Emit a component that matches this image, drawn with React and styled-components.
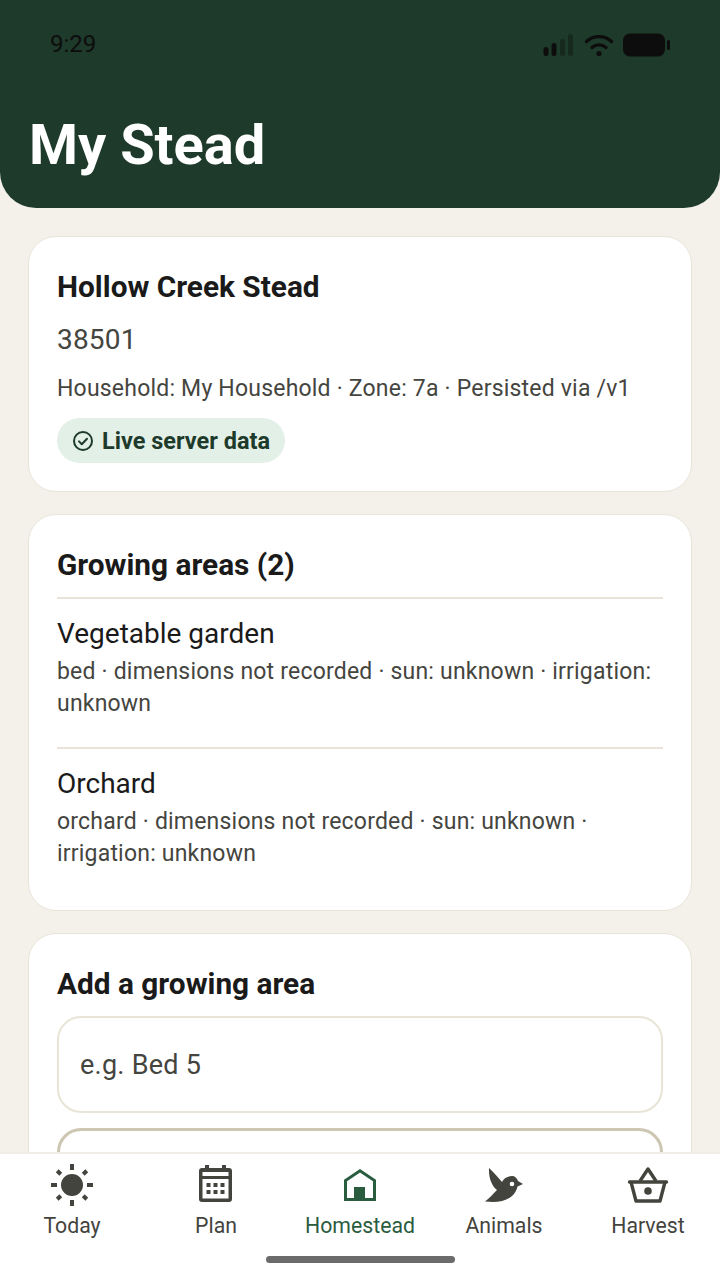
import React from 'react';
import styled, { createGlobalStyle } from 'styled-components';

const GlobalStyle = createGlobalStyle`
  html, body {
    margin: 0;
    padding: 0;
    background: #f4f1ea;
    font-family: Roboto, "Liberation Sans", sans-serif;
  }
  * { box-sizing: border-box; }
`;

const Screen = styled.div`
  width: 720px;
  height: 1280px;
  display: flex;
  flex-direction: column;
  overflow: hidden;
  background: #f4f1ea;
`;

const Header = styled.header`
  flex: none;
  height: 208px;
  background: #1e3a2b;
  border-radius: 0 0 36px 36px;
  padding: 0 50px 0 29px;
  display: flex;
  flex-direction: column;
`;

const StatusBar = styled.div`
  height: 90px;
  display: flex;
  align-items: center;
  justify-content: space-between;
  padding-left: 21px;
`;

const Clock = styled.span`
  font-size: 24px;
  color: #0d0d0d;
  margin-top: -2px;
`;

const StatusIcons = styled.div`
  display: flex;
  align-items: center;
  gap: 9px;
  margin-top: -1px;
`;

const Title = styled.h1`
  margin: 0;
  font-size: 56px;
  line-height: 60px;
  font-weight: 700;
  color: #fff;
  padding-top: 25px;
`;

const Content = styled.main`
  flex: 1;
  min-height: 0;
  overflow: hidden;
  padding: 28px 28px 0;
  display: flex;
  flex-direction: column;
  gap: 22px;
`;

const Card = styled.section`
  flex: none;
  background: #fff;
  border: 1px solid #e8e4d9;
  border-radius: 28px;
  padding: 28px;
`;

const CardTitle = styled.h2`
  margin: 0;
  font-size: 29.8px;
  line-height: 44px;
  font-weight: 700;
  color: #1a1a1a;
`;

const Zip = styled.div`
  font-size: 28px;
  line-height: 40px;
  margin-top: 11px;
  color: #454540;
  letter-spacing: 0.2px;
`;

const Meta = styled.div`
  font-size: 23px;
  line-height: 32px;
  margin-top: 13px;
  color: #454540;
  letter-spacing: 0.2px;
`;

const Badge = styled.div`
  display: flex;
  width: fit-content;
  align-items: center;
  gap: 8px;
  height: 45px;
  margin-top: 13px;
  padding: 0 15px;
  border-radius: 23px;
  background: #e3f0e8;
  color: #1e3a2b;
  font-size: 23.5px;
  font-weight: 700;
`;

const AreaList = styled.div`
  margin-top: 10px;
`;

const AreaRow = styled.div`
  border-top: 2px solid #e8e4d9;
  padding: 15px 0 27px;

  &:last-child {
    padding-bottom: 12px;
  }
`;

const AreaName = styled.div`
  font-size: 28px;
  line-height: 40px;
  color: #1a1a1a;
`;

const AreaMeta = styled.div`
  font-size: 23px;
  line-height: 32px;
  margin-top: 2px;
  color: #454540;
  letter-spacing: 0.2px;
`;

const Fields = styled.div`
  display: flex;
  flex-direction: column;
  gap: 15px;
  margin-top: 10px;
`;

const Field = styled.div`
  flex: none;
  height: 97px;
  padding: 0 21px;
  display: flex;
  align-items: center;
  border: ${p => (p.$focused ? '3px solid #cdc6b2' : '2px solid #e8e4d6')};
  border-radius: 24px;
  font-size: 27px;
  color: #454540;
  letter-spacing: 0.25px;
  background: #fff;
`;

const TabBar = styled.nav`
  flex: none;
  height: 128px;
  background: #fff;
  border-top: 2px solid #f0ede6;
  display: grid;
  grid-template-columns: repeat(5, 144px);
  position: relative;
`;

const Tab = styled.div`
  display: flex;
  flex-direction: column;
  align-items: center;
  padding-top: 9px;
  color: ${p => (p.$active ? '#2a5c40' : '#44443e')};
  font-size: 21.25px;
  font-weight: 450;
`;

const TabIcon = styled.div`
  width: 44px;
  height: 44px;
  display: flex;
  align-items: center;
  justify-content: center;
`;

const TabLabel = styled.span`
  line-height: 28px;
  margin-top: 5px;
`;

const HomeIndicator = styled.div`
  position: absolute;
  left: 266px;
  bottom: 17px;
  width: 189px;
  height: 7px;
  border-radius: 4px;
  background: #6b6b6b;
`;

const Signal = () => (
  <svg width="32" height="24" viewBox="0 0 32 24">
    <rect x="0.500" y="14" width="5" height="9" rx="2.500" fill="#0d0d0d" />
    <rect x="8.500" y="10" width="5" height="13" rx="2.500" fill="#0d0d0d" />
    <rect x="17" y="6" width="5" height="17" rx="2.500" fill="#16291f" />
    <rect x="25" y="1" width="5" height="22" rx="2.500" fill="#16291f" />
  </svg>
);

const Wifi = () => (
  <svg width="30" height="24" viewBox="0 0 30 24" fill="none" stroke="#0d0d0d" strokeWidth="3.400" strokeLinecap="round">
    <path d="M2.500 8.500C9.500 2 20.500 2 27.500 8.500" />
    <path d="M8 14.500C12 11 18 11 22 14.500" />
    <circle cx="15" cy="20.500" r="2.600" fill="#0d0d0d" stroke="none" />
  </svg>
);

const Battery = () => (
  <svg width="47" height="24" viewBox="0 0 47 24">
    <rect x="0" y="0.500" width="42" height="23" rx="7" fill="#0d0d0d" />
    <rect x="44" y="7" width="3" height="10" rx="1.500" fill="#0d0d0d" />
  </svg>
);

const CheckCircle = () => (
  <svg width="22" height="22" viewBox="0 0 22 22" fill="none" stroke="#1e3a2b" strokeWidth="2" strokeLinecap="round" strokeLinejoin="round">
    <circle cx="11" cy="11" r="9" />
    <path d="M7 11.400l2.800 2.800L15 8.800" />
  </svg>
);

const SunIcon = () => (
  <svg width="42" height="42" viewBox="0 0 42 42" fill="#44443e">
    <circle cx="21" cy="21" r="11" />
    <rect x="19" y="0" width="4" height="6" />
    <rect x="19" y="36" width="4" height="6" />
    <rect x="0" y="19" width="6" height="4" />
    <rect x="36" y="19" width="6" height="4" />
    <rect x="5.500" y="6.500" width="5" height="4" transform="rotate(45 8 8.500)" />
    <rect x="31.500" y="6.500" width="5" height="4" transform="rotate(-45 34 8.500)" />
    <rect x="5.500" y="31.500" width="5" height="4" transform="rotate(-45 8 33.500)" />
    <rect x="31.500" y="31.500" width="5" height="4" transform="rotate(45 34 33.500)" />
  </svg>
);

const PlanIcon = () => (
  <svg width="34" height="40" viewBox="0 0 34 40" fill="#44443e">
    <rect x="6" y="0" width="4" height="6" />
    <rect x="23" y="0" width="4" height="6" />
    <path fillRule="evenodd" d="M3 3h27a3 3 0 0 1 3 3v28a3 3 0 0 1-3 3H3a3 3 0 0 1-3-3V6a3 3 0 0 1 3-3zM3.500 7v4h26V7zM3.500 14v19.500h26V14z" />
    <rect x="7.500" y="18" width="4" height="4" />
    <rect x="14.500" y="18" width="4" height="4" />
    <rect x="21.500" y="18" width="4" height="4" />
    <rect x="7.500" y="25" width="4" height="4" />
    <rect x="14.500" y="25" width="4" height="4" />
    <rect x="21.500" y="25" width="4" height="4" />
  </svg>
);

const HomeIcon = () => (
  <svg width="32" height="32" viewBox="0 0 32 32" fill="none">
    <path d="M1.500 30.500V11.500L16 1.800l14.500 9.700v19z" stroke="#2a5c40" strokeWidth="3" />
    <rect x="10" y="18" width="11" height="13" fill="#2a5c40" />
  </svg>
);

const BirdIcon = () => (
  <svg width="38" height="34" viewBox="0 0 38 34" fill="#44443e">
    <path d="M4 0C9 5 13 9 17 14C19 10 23 8 27 8C30 8 32 10 33 13L38 16L32.500 18.500C31 26 25 31 17 33C11 34.500 5 34 0 33.500C4 30.500 8 26 12 22C7 18 3.500 10 4 0Z" />
    <circle cx="27" cy="16" r="2.300" fill="#fff" />
  </svg>
);

const BasketIcon = () => (
  <svg width="42" height="36" viewBox="0 0 42 36" fill="none" stroke="#44443e" strokeWidth="3.400" strokeLinejoin="round">
    <path d="M2.500 15h37" strokeLinecap="round" />
    <path d="M4 15l5 19h24l5-19" />
    <path d="M13 14l8-12 8 12" />
    <circle cx="21" cy="24" r="3.800" fill="#44443e" stroke="none" />
  </svg>
);

const tabs = [
  { label: 'Today', icon: <SunIcon /> },
  { label: 'Plan', icon: <PlanIcon /> },
  { label: 'Homestead', icon: <HomeIcon />, active: true },
  { label: 'Animals', icon: <BirdIcon /> },
  { label: 'Harvest', icon: <BasketIcon /> },
];

const areas = [
  {
    name: 'Vegetable garden',
    meta: 'bed · dimensions not recorded · sun: unknown · irrigation: unknown',
  },
  {
    name: 'Orchard',
    meta: 'orchard · dimensions not recorded · sun: unknown · irrigation: unknown',
  },
];

export default function App() {
  return (
    <Screen>
      <GlobalStyle />
      <Header>
        <StatusBar>
          <Clock>9:29</Clock>
          <StatusIcons>
            <Signal />
            <Wifi />
            <Battery />
          </StatusIcons>
        </StatusBar>
        <Title>My Stead</Title>
      </Header>
      <Content>
        <Card>
          <CardTitle>Hollow Creek Stead</CardTitle>
          <Zip>38501</Zip>
          <Meta>Household: My Household · Zone: 7a · Persisted via /v1</Meta>
          <Badge>
            <CheckCircle />
            Live server data
          </Badge>
        </Card>
        <Card>
          <CardTitle>Growing areas (2)</CardTitle>
          <AreaList>
            {areas.map(area => (
              <AreaRow key={area.name}>
                <AreaName>{area.name}</AreaName>
                <AreaMeta>{area.meta}</AreaMeta>
              </AreaRow>
            ))}
          </AreaList>
        </Card>
        <Card>
          <CardTitle>Add a growing area</CardTitle>
          <Fields>
            <Field>e.g. Bed 5</Field>
            <Field $focused />
          </Fields>
        </Card>
      </Content>
      <TabBar>
        {tabs.map(tab => (
          <Tab key={tab.label} $active={tab.active}>
            <TabIcon>{tab.icon}</TabIcon>
            <TabLabel>{tab.label}</TabLabel>
          </Tab>
        ))}
        <HomeIndicator />
      </TabBar>
    </Screen>
  );
}
